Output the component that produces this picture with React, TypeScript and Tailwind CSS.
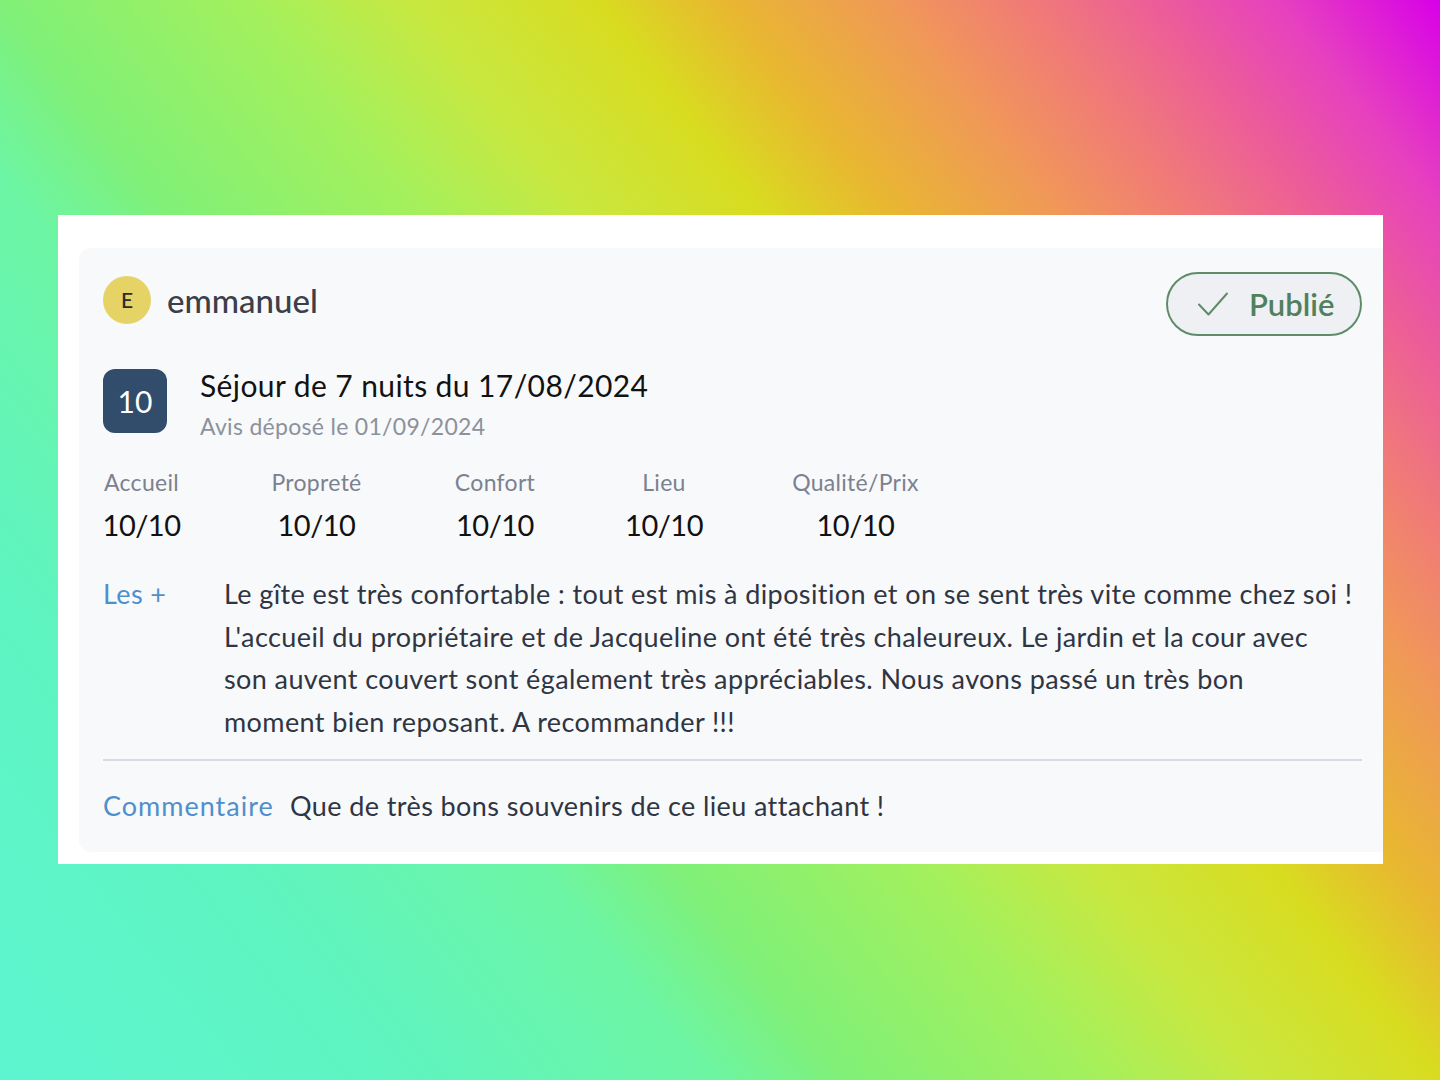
import React from "react";

const ratings = [
  { label: "Accueil", value: "10/10", w: "w-[77px]" },
  { label: "Propreté", value: "10/10", w: "w-[95px]" },
  { label: "Confort", value: "10/10", w: "w-[84px]" },
  { label: "Lieu", value: "10/10", w: "w-[76px]" },
  { label: "Qualité/Prix", value: "10/10", w: "w-[129px]" },
];

const positives = [
  "Le gîte est très confortable : tout est mis à diposition et on se sent très vite comme chez soi !",
  "L'accueil du propriétaire et de Jacqueline ont été très chaleureux. Le jardin et la cour avec",
  "son auvent couvert sont également très appréciables. Nous avons passé un très bon",
  "moment bien reposant. A recommander !!!",
];

function CheckIcon() {
  return (
    <svg width="32" height="26" viewBox="0 0 32 26" fill="none">
      <path
        d="M2 13.5 L11.5 23.5 L30 2.5"
        stroke="#5e8c69"
        strokeWidth="2"
        strokeLinecap="round"
        strokeLinejoin="round"
      />
    </svg>
  );
}

export default function App() {
  return (
    <div className="w-[1440px] h-[1080px] overflow-hidden bg-[linear-gradient(52deg,#5cf5d0_0%,#5ff4c0_18%,#6cf5a4_31%,#80f078_37%,#a4f05c_48%,#c8e840_55%,#d8dc20_63%,#e8b830_68.5%,#f09858_76%,#f07a78_82%,#ec5a9c_88%,#e640c0_93%,#d800e8_100%)] [font-family:Lato,sans-serif]">
      <div className="flex flex-col pt-[215px] pl-[58px]">
        <div className="w-[1325px] h-[649px] bg-white pt-[33px] pl-[21px] pb-[12px]">
          <div className="h-full bg-[#f8f9fb] rounded-l-xl pl-6 pr-[21px] pt-6 pb-7 flex flex-col">
            {/* header */}
            <div className="flex items-start justify-between">
              <div className="flex items-center gap-4 mt-1">
                <div className="w-12 h-12 rounded-full bg-[#e6d366] flex items-center justify-center text-[21px] font-medium text-[#2b2b2b]">
                  E
                </div>
                <span className="text-[33px] font-medium text-[#3b3f4a] leading-none">emmanuel</span>
              </div>
              <div className="h-16 w-[196px] rounded-full border-2 border-[#5e8c69] bg-[#eef0f4] flex items-center pl-[29px] gap-[20px]">
                <CheckIcon />
                <span className="text-[31px] font-semibold text-[#51805c] leading-none">Publié</span>
              </div>
            </div>

            {/* stay */}
            <div className="flex items-start gap-[33px] mt-[31px]">
              <div className="mt-[2px] w-16 h-16 rounded-xl bg-[#324c6c] flex items-center justify-center text-white text-[30px]">
                10
              </div>
              <div className="flex flex-col">
                <span className="text-[30px] leading-[36px] tracking-[0.4px] text-[#121212]">Séjour de 7 nuits du 17/08/2024</span>
                <span className="text-[23px] leading-[28px] tracking-[0.3px] mt-[9px] text-[#8c919b]">Avis déposé le 01/09/2024</span>
              </div>
            </div>

            {/* ratings */}
            <div className="flex gap-[89px] mt-[28px]">
              {ratings.map((r) => (
                <div key={r.label} className={`${r.w} flex flex-col items-center`}>
                  <span className="text-[23px] leading-[28px] tracking-[0.3px] text-[#7b8190] whitespace-nowrap">{r.label}</span>
                  <span className="text-[29px] leading-[36px] tracking-[-0.5px] mt-[11px] text-[#111111] whitespace-nowrap">{r.value}</span>
                </div>
              ))}
            </div>

            {/* les + */}
            <div className="flex mt-[30px] text-[27px] leading-[42.5px] tracking-[0.4px]">
              <div className="w-[121px] shrink-0 text-[#4f8fcb]">Les +</div>
              <div className="text-[#2f3542]">
                {positives.map((l) => (
                  <div key={l} className="whitespace-nowrap">{l}</div>
                ))}
              </div>
            </div>

            <div className="h-[2px] bg-[#d7dbe3] mt-4" />

            {/* commentaire */}
            <div className="flex items-center mt-[27px] text-[27px] leading-[36px] tracking-[0.4px]">
              <span className="w-[187px] shrink-0 text-[#4f8fcb] tracking-[1px]">Commentaire</span>
              <span className="text-[#2f3542]">Que de très bons souvenirs de ce lieu attachant !</span>
            </div>
          </div>
        </div>
      </div>
    </div>
  );
}
